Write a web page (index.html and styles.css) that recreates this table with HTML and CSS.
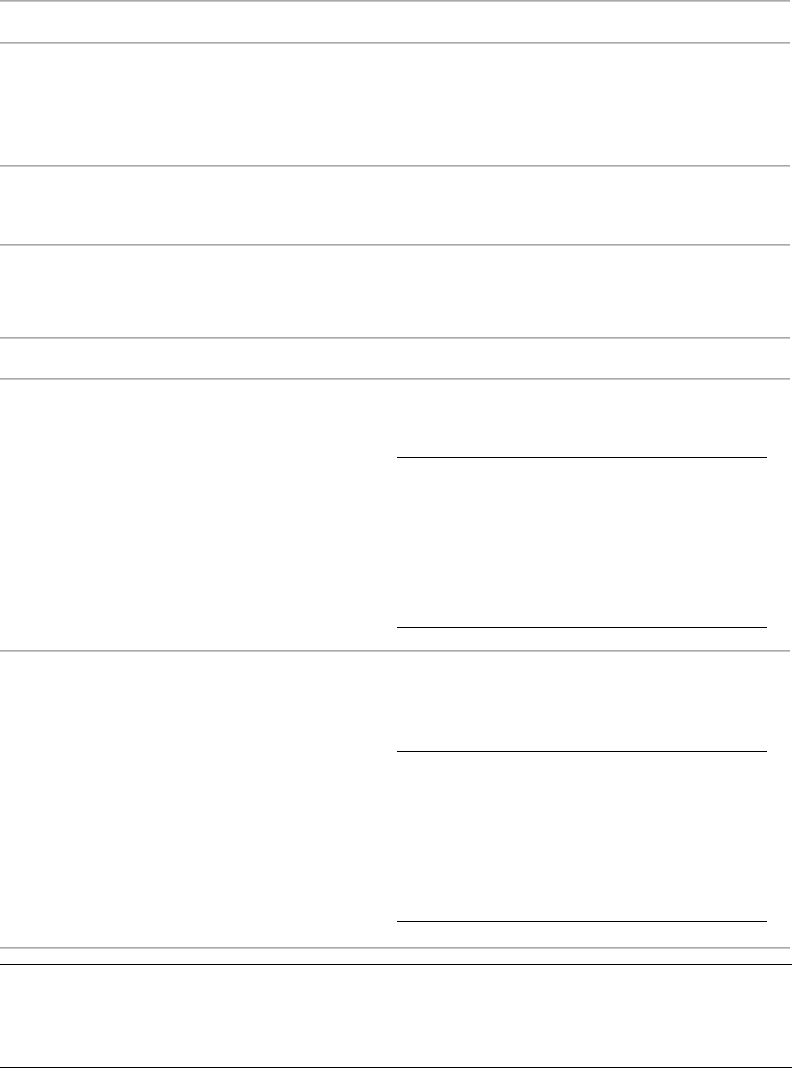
FILE: index.html
```html
<!DOCTYPE html>
<html>
<head>
  <meta charset="utf-8">
  <title>Form</title>
  <link rel="stylesheet" href="styles.css">
</head>
<body>
  <div class="sheet">
    <div class="rule"></div>
    <div class="row" style="height: 40px"></div>
    <div class="rule"></div>
    <div class="row" style="height: 121px"></div>
    <div class="rule"></div>
    <div class="row" style="height: 77px"></div>
    <div class="rule"></div>
    <div class="row" style="height: 91px"></div>
    <div class="rule"></div>
    <div class="row" style="height: 39px"></div>
    <div class="rule"></div>
    <div class="row split">
      <div class="left"></div>
      <div class="right">
        <div class="field top-field"></div>
        <div class="field"></div>
      </div>
    </div>
    <div class="rule"></div>
    <div class="row split second">
      <div class="left"></div>
      <div class="right">
        <div class="field top-field"></div>
        <div class="field"></div>
      </div>
    </div>
    <div class="rule"></div>
    <div class="footer">
      <div class="footer-body"></div>
    </div>
  </div>
</body>
</html>
```

FILE: styles.css
```css
body {
  margin: 0;
  background-color: #fff;
  font-family: 'Liberation Sans', Arial, sans-serif;
}

.sheet {
  display: flex;
  flex-direction: column;
  width: 790px;
}

.rule {
  height: 1px;
  border-top: 1px solid #a9a9a9;
  background-color: #c8c8c8;
}

.split {
  display: flex;
  height: 270px;
}

.split.second {
  height: 295px;
}

.left {
  width: 397px;
}

.right {
  width: 370px;
  display: flex;
  flex-direction: column;
}

.field {
  height: 169px;
  border-bottom: 1px solid #000;
}

.right .top-field {
  height: 77px;
}

.second .top-field {
  height: 99px;
}

.footer {
  margin-top: 15px;
  border-top: 1px solid #000;
  height: 102px;
  border-bottom: 1px solid #000;
  width: 792px;
}
```
